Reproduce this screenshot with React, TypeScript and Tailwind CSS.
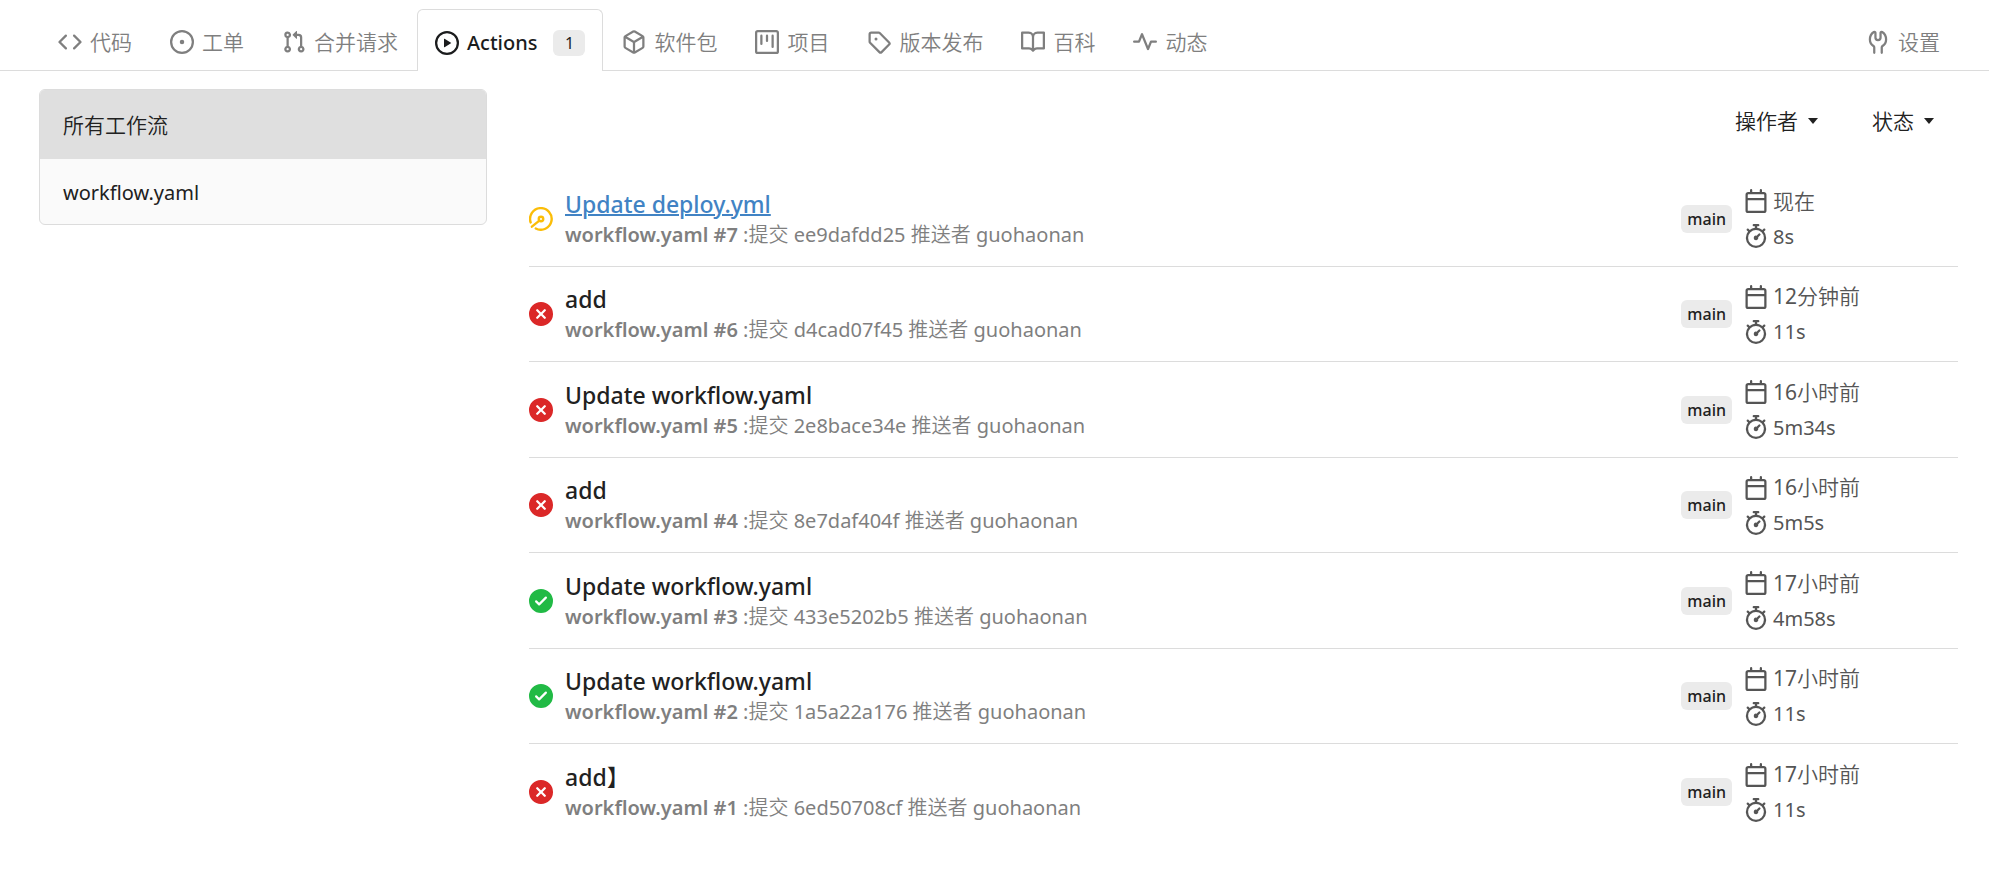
import React from "react";

type OcticonProps = { className?: string; children: React.ReactNode };

function Octicon({ className = "", children }: OcticonProps) {
  return (
    <svg viewBox="0 0 16 16" width="24" height="24" fill="currentColor" aria-hidden="true" className={`shrink-0 ${className}`}>
      {children}
    </svg>
  );
}

const icons = {
  code: <path d="m11.28 3.22 4.25 4.25a.75.75 0 0 1 0 1.06l-4.25 4.25a.749.749 0 0 1-1.275-.326.749.749 0 0 1 .215-.734L13.94 8l-3.72-3.72a.749.749 0 0 1 .326-1.275.749.749 0 0 1 .734.215Zm-6.56 0a.751.751 0 0 1 1.042.018.751.751 0 0 1 .018 1.042L2.06 8l3.72 3.72a.749.749 0 0 1-.326 1.275.749.749 0 0 1-.734-.215L.47 8.53a.75.75 0 0 1 0-1.06Z" />,
  issue: (
    <>
      <path d="M8 9.5a1.5 1.5 0 1 0 0-3 1.5 1.5 0 0 0 0 3Z" />
      <path d="M8 0a8 8 0 1 1 0 16A8 8 0 0 1 8 0ZM1.5 8a6.5 6.5 0 1 0 13 0 6.5 6.5 0 0 0-13 0Z" />
    </>
  ),
  pull: <path d="M1.5 3.25a2.25 2.25 0 1 1 3 2.122v5.256a2.251 2.251 0 1 1-1.5 0V5.372A2.25 2.25 0 0 1 1.5 3.25Zm5.677-.177L9.573.677A.25.25 0 0 1 10 .854V2.5h1A2.5 2.5 0 0 1 13.5 5v5.628a2.251 2.251 0 1 1-1.5 0V5a1 1 0 0 0-1-1h-1v1.646a.25.25 0 0 1-.427.177L7.177 3.427a.25.25 0 0 1 0-.354ZM3.75 2.5a.75.75 0 1 0 0 1.5.75.75 0 0 0 0-1.5Zm0 9.5a.75.75 0 1 0 0 1.5.75.75 0 0 0 0-1.5Zm8.25.75a.75.75 0 1 0 1.5 0 .75.75 0 0 0-1.5 0Z" />,
  play: <path d="M8 0a8 8 0 1 1 0 16A8 8 0 0 1 8 0ZM1.5 8a6.5 6.5 0 1 0 13 0 6.5 6.5 0 0 0-13 0Zm4.879-2.773 4.264 2.559a.25.25 0 0 1 0 .428l-4.264 2.559A.25.25 0 0 1 6 10.559V5.442a.25.25 0 0 1 .379-.215Z" />,
  package: <path d="m8.878.392 5.25 3.045c.54.314.872.89.872 1.514v6.098a1.75 1.75 0 0 1-.872 1.514l-5.25 3.045a1.75 1.75 0 0 1-1.756 0l-5.25-3.045A1.75 1.75 0 0 1 1 11.049V4.951c0-.624.332-1.201.872-1.514L7.122.392a1.75 1.75 0 0 1 1.756 0ZM7.875 1.69l-4.63 2.685L8 7.133l4.755-2.758-4.63-2.685a.248.248 0 0 0-.25 0ZM2.5 5.677v5.372c0 .09.047.171.125.216l4.625 2.683V8.432Zm6.25 8.271 4.625-2.683a.25.25 0 0 0 .125-.216V5.677L8.75 8.432Z" />,
  project: <path d="M1.75 0h12.5C15.216 0 16 .784 16 1.75v12.5A1.75 1.75 0 0 1 14.25 16H1.75A1.75 1.75 0 0 1 0 14.25V1.75C0 .784.784 0 1.75 0ZM1.5 1.75v12.5c0 .138.112.25.25.25h12.5a.25.25 0 0 0 .25-.25V1.75a.25.25 0 0 0-.25-.25H1.75a.25.25 0 0 0-.25.25ZM11.75 3a.75.75 0 0 1 .75.75v7.5a.75.75 0 0 1-1.5 0v-7.5a.75.75 0 0 1 .75-.75Zm-8.25.75a.75.75 0 0 1 1.5 0v5.5a.75.75 0 0 1-1.5 0ZM8 3a.75.75 0 0 1 .75.75v3.5a.75.75 0 0 1-1.5 0v-3.5A.75.75 0 0 1 8 3Z" />,
  tag: <path d="M1 7.775V2.75C1 1.784 1.784 1 2.75 1h5.025c.464 0 .91.184 1.238.513l6.25 6.25a1.75 1.75 0 0 1 0 2.474l-5.026 5.026a1.75 1.75 0 0 1-2.474 0l-6.25-6.25A1.752 1.752 0 0 1 1 7.775Zm1.5 0c0 .066.026.13.073.177l6.25 6.25a.25.25 0 0 0 .354 0l5.025-5.025a.25.25 0 0 0 0-.354l-6.25-6.25a.25.25 0 0 0-.177-.073H2.75a.25.25 0 0 0-.25.25ZM6 5a1 1 0 1 1 0 2 1 1 0 0 1 0-2Z" />,
  book: <path d="M0 1.75A.75.75 0 0 1 .75 1h4.253c1.227 0 2.317.59 3 1.501A3.743 3.743 0 0 1 11.006 1h4.245a.75.75 0 0 1 .75.75v10.5a.75.75 0 0 1-.75.75h-4.507a2.25 2.25 0 0 0-1.591.659l-.622.621a.75.75 0 0 1-1.06 0l-.622-.621A2.25 2.25 0 0 0 5.258 13H.75a.75.75 0 0 1-.75-.75Zm7.251 10.324.004-5.073-.002-2.253A2.25 2.25 0 0 0 5.003 2.5H1.5v9h3.757a3.75 3.75 0 0 1 1.994.574ZM8.755 4.75l-.004 7.322a3.752 3.752 0 0 1 1.992-.572H14.5v-9h-3.495a2.25 2.25 0 0 0-2.25 2.25Z" />,
  pulse: <path d="M6 2c.306 0 .582.187.696.471L10 10.731l1.304-3.26A.751.751 0 0 1 12 7h3.25a.75.75 0 0 1 0 1.5h-2.742l-1.812 4.528a.751.751 0 0 1-1.392 0L6 4.77 4.696 8.03A.75.75 0 0 1 4 8.5H.75a.75.75 0 0 1 0-1.5h2.742l1.812-4.529A.751.751 0 0 1 6 2Z" />,
  tools: (
    <path
      d="M5.5 15.2v-3.6c0-.4-.2-.7-.5-.9-1.5-1-2.4-2.6-2.4-4.4 0-2 1-4 2.6-5 .5-.3 1.1 0 1.1.6V5c0 1 .8 1.7 1.7 1.7S9.7 6 9.7 5V1.900c0-.6.6-.9 1.1-.6 1.6 1 2.6 3 2.6 5 0 1.800-.9 3.400-2.400 4.400-.3.2-.5.5-.5.9v3.6"
      fill="none" stroke="currentColor" strokeWidth="1.5" strokeLinecap="round"
    />
  ),
  calendar: <path d="M4.75 0a.75.75 0 0 1 .75.75V2h5V.75a.75.75 0 0 1 1.5 0V2h1.25c.966 0 1.75.784 1.75 1.75v10.5A1.75 1.75 0 0 1 13.25 16H2.75A1.75 1.75 0 0 1 1 14.25V3.75C1 2.784 1.784 2 2.75 2H4V.75A.75.75 0 0 1 4.75 0ZM2.5 7.5v6.75c0 .138.112.25.25.25h10.5a.25.25 0 0 0 .25-.25V7.5Zm10.75-4H2.75a.25.25 0 0 0-.25.25V6h11V3.75a.25.25 0 0 0-.25-.25Z" />,
  stopwatch: <path d="M5.75.75A.75.75 0 0 1 6.5 0h3a.75.75 0 0 1 0 1.5h-.75v1l-.001.041a6.724 6.724 0 0 1 3.464 1.435l.007-.006.75-.75a.749.749 0 0 1 1.275.326.749.749 0 0 1-.215.734l-.75.75-.006.007a6.75 6.75 0 1 1-10.548 0L2.72 5.03l-.75-.75a.751.751 0 0 1 .018-1.042.751.751 0 0 1 1.042-.018l.75.75.007.006A6.72 6.72 0 0 1 7.25 2.541V1.5H6.5a.75.75 0 0 1-.75-.75ZM8 14.5a5.25 5.25 0 1 0-.001-10.501A5.25 5.25 0 0 0 8 14.5Zm.389-6.7 1.33-1.33a.75.75 0 1 1 1.061 1.06L9.45 8.861A1.503 1.503 0 0 1 8 10.75a1.499 1.499 0 1 1 .389-2.95Z" />,
  check: <path d="M8 16A8 8 0 1 1 8 0a8 8 0 0 1 0 16Zm3.78-9.72a.751.751 0 0 0-.018-1.042.751.751 0 0 0-1.042-.018L6.75 9.19 5.28 7.72a.751.751 0 0 0-1.042.018.751.751 0 0 0-.018 1.042l2 2a.75.75 0 0 0 1.06 0Z" />,
  cross: <path d="M2.343 13.657A8 8 0 1 1 13.658 2.343 8 8 0 0 1 2.343 13.657ZM6.03 4.97a.751.751 0 0 0-1.042.018.751.751 0 0 0-.018 1.042L6.94 8 4.97 9.97a.749.749 0 0 0 .326 1.275.749.749 0 0 0 .734-.215L8 9.06l1.97 1.97a.749.749 0 0 0 1.275-.326.749.749 0 0 0-.215-.734L9.06 8l1.97-1.97a.749.749 0 0 0-.326-1.275.749.749 0 0 0-.734.215L8 6.94Z" />,
  meter: (
    <g fill="none" stroke="currentColor" strokeWidth="1.6" strokeLinecap="round">
      <path d="M1.1 10.3A7.2 7.2 0 1 1 4.5 14.3" />
      <circle cx="8" cy="8" r="1.5" />
      <path d="M6.9 9.1 1.9 13.1" />
    </g>
  ),
};

type IconName = keyof typeof icons;

const tabs: { label: string; icon: IconName; count?: number }[] = [
  { label: "代码", icon: "code" },
  { label: "工单", icon: "issue" },
  { label: "合并请求", icon: "pull" },
  { label: "Actions", icon: "play", count: 1 },
  { label: "软件包", icon: "package" },
  { label: "项目", icon: "project" },
  { label: "版本发布", icon: "tag" },
  { label: "百科", icon: "book" },
  { label: "动态", icon: "pulse" },
];

type Status = "running" | "failure" | "success";

const runs: { id: number; title: string; sha: string; status: Status; when: string; took: string }[] = [
  { id: 7, title: "Update deploy.yml", sha: "ee9dafdd25", status: "running", when: "现在", took: "8s" },
  { id: 6, title: "add", sha: "d4cad07f45", status: "failure", when: "12分钟前", took: "11s" },
  { id: 5, title: "Update workflow.yaml", sha: "2e8bace34e", status: "failure", when: "16小时前", took: "5m34s" },
  { id: 4, title: "add", sha: "8e7daf404f", status: "failure", when: "16小时前", took: "5m5s" },
  { id: 3, title: "Update workflow.yaml", sha: "433e5202b5", status: "success", when: "17小时前", took: "4m58s" },
  { id: 2, title: "Update workflow.yaml", sha: "1a5a22a176", status: "success", when: "17小时前", took: "11s" },
  { id: 1, title: "add】", sha: "6ed50708cf", status: "failure", when: "17小时前", took: "11s" },
];

const statusIcon: Record<Status, { icon: IconName; color: string }> = {
  running: { icon: "meter", color: "text-[#fbbd08]" },
  failure: { icon: "cross", color: "text-[#db2828]" },
  success: { icon: "check", color: "text-[#21ba45]" },
};

function Tab({ label, icon, count }: { label: string; icon: IconName; count?: number }) {
  if (count !== undefined) {
    return (
      <a href="#actions" aria-current="page" className="-mb-px flex h-[62px] items-center gap-2 rounded-t-md border border-b-0 border-[#dcdcdc] bg-white px-[17px] pt-1 font-medium text-[#1b1c1d]">
        <Octicon>{icons[icon]}</Octicon>
        <span>{label}</span>
        <span className="ml-2 flex h-[26px] w-8 items-center justify-center rounded-md bg-[#ebebeb] text-base font-normal">{count}</span>
      </a>
    );
  }
  return (
    <a href={`#${icon}`} className="flex h-[61px] items-center gap-2 px-[19px] pt-1 text-[21px] text-[#7f7f7f]">
      <Octicon>{icons[icon]}</Octicon>
      <span className="pt-0.5">{label}</span>
    </a>
  );
}

function Filter({ label }: { label: string }) {
  return (
    <button type="button" className="flex items-center gap-2.5 text-[21px] leading-8">
      {label}
      <svg viewBox="0 0 10 6" width="10" height="6" fill="currentColor" aria-hidden="true"><path d="M0 0h10L5 6Z" /></svg>
    </button>
  );
}

export default function App() {
  return (
    <div className="bg-white font-['Noto_Sans','Noto_Sans_CJK_SC_DemiLight','Noto_Sans_CJK_SC_Light','Noto_Sans_CJK_SC',sans-serif] text-[20px] text-[#212121]">
      <nav className="flex items-end border-b border-[#dcdcdc] pt-[9px] pr-[30px] pl-[39px]">
        {tabs.map((t) => <Tab key={t.icon} {...t} />)}
        <div className="ml-auto"><Tab label="设置" icon="tools" /></div>
      </nav>
      <main className="flex gap-[42px] pt-[18px] pr-[31px] pb-8 pl-[39px]">
        <aside className="w-[448px] shrink-0 self-start overflow-hidden rounded-md border border-[#dcdcdc] bg-[#fafafa]">
          <a href="#all" className="flex h-[69px] items-center bg-[#dfdfdf] px-[23px] pt-0.5 text-[21px]">所有工作流</a>
          <a href="#workflow" className="flex h-[65px] items-center px-[23px] pt-0.5">workflow.yaml</a>
        </aside>
        <section className="min-w-0 grow">
          <div className="flex justify-end gap-[54px] pt-4 pr-6 pb-[34px]">
            <Filter label="操作者" />
            <Filter label="状态" />
          </div>
          <ul className="divide-y divide-[#dcdcdc]">
            {runs.map((r) => (
              <li key={r.id} className="flex items-center odd:h-24 even:h-[95px]">
                <Octicon className={statusIcon[r.status].color}>{icons[statusIcon[r.status].icon]}</Octicon>
                <div className="ml-3 min-w-0 grow">
                  <a href={`#run-${r.id}`} className={r.status === "running" ? "block text-[23px] leading-[30px] font-medium text-[#4183c4] underline decoration-2" : "block text-[23px] leading-[30px] font-medium"}>{r.title}</a>
                  <p className="mt-0.5 leading-7 text-[#7f7f7f]"><b className="font-semibold">workflow.yaml #{r.id}</b> :提交 {r.sha} 推送者 guohaonan</p>
                </div>
                <span className="rounded-md bg-[#ebebeb] px-1.5 text-base leading-7 font-medium">main</span>
                <div className="ml-3 w-[214px] text-[#555]">
                  <div className="flex items-center gap-[5px] text-[21px] leading-[35px]"><Octicon>{icons.calendar}</Octicon>{r.when}</div>
                  <div className="flex items-center gap-[5px] leading-[35px]"><Octicon>{icons.stopwatch}</Octicon>{r.took}</div>
                </div>
              </li>
            ))}
          </ul>
        </section>
      </main>
    </div>
  );
}
